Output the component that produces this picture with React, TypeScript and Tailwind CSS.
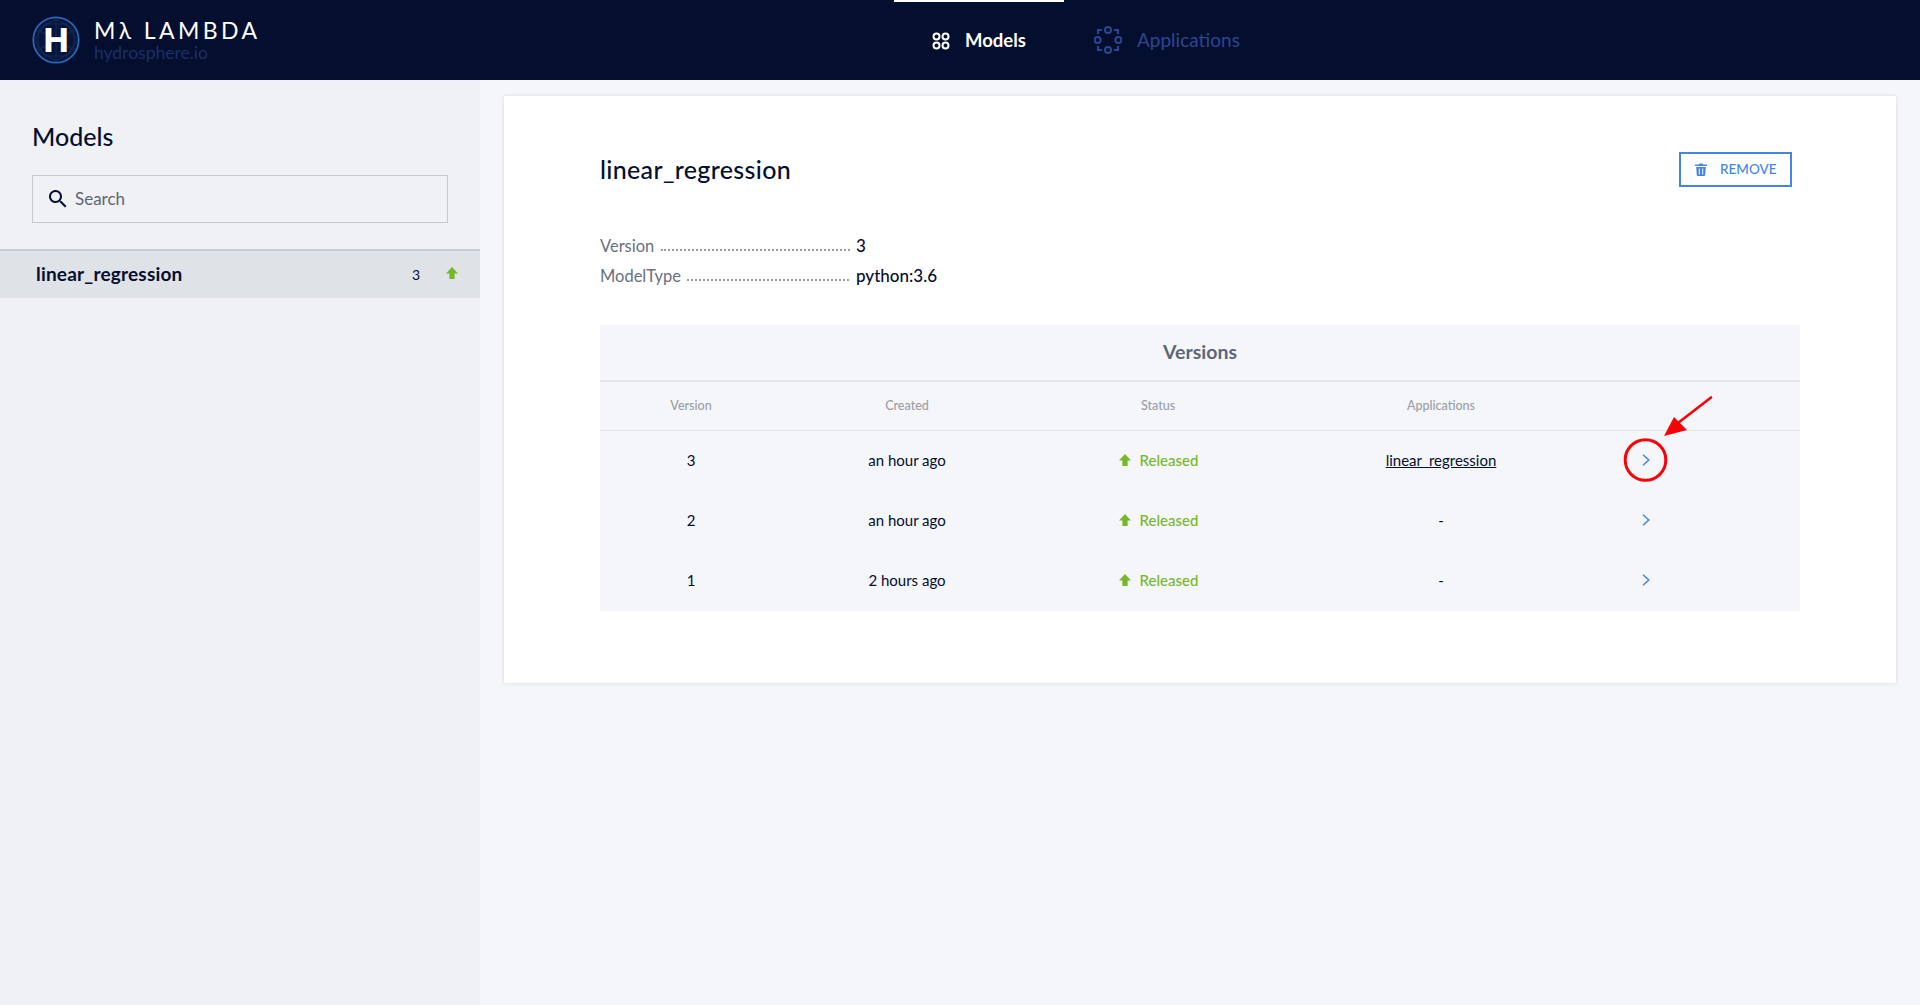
const rows = [
  { version: '3', created: 'an hour ago', app: 'linear_regression' },
  { version: '2', created: 'an hour ago', app: '-' },
  { version: '1', created: '2 hours ago', app: '-' },
];

const tableCols = 'grid grid-cols-[182px_250px_252px_314px_96px_1fr] items-center text-center';

function UpArrow({ className }: { className?: string }) {
  return (
    <svg viewBox="0 0 12 12" className={className}>
      <path d="M6 0 12 6.4H8.6V12H3.4V6.4H0Z" fill="#76b82a" />
    </svg>
  );
}

function Logo() {
  return (
    <svg viewBox="0 0 48 48" className="h-12 w-12 shrink-0">
      <circle cx="24" cy="24" r="22.7" fill="#061539" stroke="#2b66b5" strokeWidth="1.8" />
      <g stroke="#1b3a70" strokeWidth="0.6" fill="none">
        <path d="M24 3 42 14V34L24 45 6 34V14Z" />
        <path d="M6 14 42 34M42 14 6 34M24 3V45" />
        <path d="M13 8 35 8 45 24 35 40H13L3 24Z" />
      </g>
      <text x="24" y="36" textAnchor="middle" fontSize="33" fontWeight="800" fill="#ffffff" fontFamily="Inter, sans-serif">
        H
      </text>
    </svg>
  );
}

function ModelsIcon() {
  return (
    <svg viewBox="0 0 18 18" className="h-[18px] w-[18px]" fill="none" stroke="#ffffff" strokeWidth="2">
      <circle cx="4.5" cy="4.5" r="3" />
      <circle cx="13.5" cy="4.5" r="3" />
      <circle cx="4.5" cy="13.5" r="3" />
      <circle cx="13.5" cy="13.5" r="3" />
    </svg>
  );
}

function ApplicationsIcon() {
  return (
    <svg viewBox="0 0 28 28" className="h-7 w-7" fill="none" stroke="#2d4690" strokeWidth="2">
      <circle cx="14" cy="4" r="3" />
      <circle cx="14" cy="24" r="3" />
      <circle cx="3.6" cy="14" r="3" />
      <circle cx="24.4" cy="14" r="3" />
      <path d="M8 4H4V8M20 4H24V8M4 20V24H8M24 20V24H20" />
    </svg>
  );
}

function SearchIcon() {
  return (
    <svg viewBox="0 0 18 18" className="h-[18px] w-[18px] shrink-0" fill="#040e2e">
      <path d="M12.5 11h-.79l-.28-.27A6.5 6.5 0 1 0 10.73 11.43l.27.28v.79l5 4.99L17.49 16l-4.99-5Zm-6 0a4.5 4.5 0 1 1 0-9 4.5 4.5 0 0 1 0 9Z" />
    </svg>
  );
}

function TrashIcon() {
  return (
    <svg viewBox="0 0 12 13" className="h-[13px] w-3 shrink-0" fill="#4285e4">
      <path d="M0 1.6h3.8L4.4.4h3.2l.6 1.2H12v1.5H0Z" />
      <path fillRule="evenodd" d="M1.2 4h9.6l-.6 8.2-.8.8H2.6l-.8-.8ZM3.8 5.4v6h1v-6Zm3.4 0v6h1v-6Z" />
    </svg>
  );
}

function Chevron() {
  return (
    <svg viewBox="0 0 8 12" className="h-3 w-2" fill="none" stroke="#4285e4" strokeWidth="1.5">
      <path d="M1 .8 6.8 6 1 11.2" />
    </svg>
  );
}

export default function App() {
  return (
    <div className="relative flex h-[1005px] w-[1920px] flex-col overflow-hidden bg-[#f5f6fa] font-['Lato',sans-serif] text-[#040e2e]">
      <header className="flex h-20 shrink-0 bg-[#040e2e]">
        <div className="flex w-[894px] items-center gap-[14px] pl-8">
          <Logo />
          <div className="flex flex-col">
            <span className="text-[23px] leading-[24px] tracking-[3.4px] text-white">Mλ LAMBDA</span>
            <span className="mt-[1px] text-[17.5px] leading-[20px] text-[#1c2f69]">hydrosphere.io</span>
          </div>
        </div>
        <div className="flex h-20 w-[170px] items-center gap-[15px] border-t-2 border-white pl-[38px] text-[18.5px] font-bold text-white">
          <ModelsIcon />
          Models
        </div>
        <div className="ml-[30px] flex items-center gap-[15px] text-[19px] text-[#2d4690]">
          <ApplicationsIcon />
          Applications
        </div>
      </header>

      <div className="flex flex-1">
        <aside className="w-[480px] shrink-0 bg-[#eff1f5]">
          <h2 className="mt-[41px] pl-8 text-[25px] leading-[30px] font-medium">Models</h2>
          <div className="mx-8 mt-[24px] flex h-12 items-center gap-[8px] border border-[#c6c9ce] pl-4 text-[17px] text-[#5f6675]">
            <SearchIcon />
            Search
          </div>
          <div className="mt-[26px] flex h-[49px] items-center border-t-2 border-[#c9ccd2] bg-[#dfe2e7] pb-[1px] pl-9">
            <span className="flex-1 text-[19px] font-bold tracking-[0.2px]">linear_regression</span>
            <span className="text-[14px]">3</span>
            <UpArrow className="mr-[22px] mb-[2px] ml-[26px] h-3 w-3" />
          </div>
        </aside>

        <main className="flex-1 pt-4 pl-6">
          <section className="flex h-[587px] w-[1392px] flex-col bg-white pt-[56px] pl-[96px] shadow-[0_0_4px_rgba(4,14,46,0.12)]">
            <div className="flex h-[35px] items-center justify-between">
              <h1 className="text-[25px] font-medium tracking-[0.33px]">linear_regression</h1>
              <button className="mr-[104px] flex h-[35px] w-[113px] items-center gap-[13px] border-2 border-[#4285e4] pl-[14px] text-[13.5px] font-medium text-[#4285e4]">
                <TrashIcon />
                REMOVE
              </button>
            </div>

            <div className="mt-[44px] flex h-[30px] w-[440px] items-center text-[16.5px]">
              <span className="w-[60px] text-[#6a7080]">Version</span>
              <span className="mt-[8px] ml-[1px] w-[189px] flex-none border-b-2 border-dotted border-[#9a9da5]" />
              <span className="ml-[6px] text-[17px] font-medium">3</span>
            </div>
            <div className="flex h-[30px] w-[440px] items-center text-[16.5px]">
              <span className="w-[81px] text-[#6a7080]">ModelType</span>
              <span className="mt-[8px] ml-[6px] w-[162px] flex-none border-b-2 border-dotted border-[#9a9da5]" />
              <span className="ml-[7px] text-[17px] font-medium">python:3.6</span>
            </div>

            <div className="mt-[34px] w-[1200px] bg-[#f5f6fa]">
              <div className="flex h-[57px] items-center justify-center border-b-2 border-[#e1e3e8] pb-[1px] text-[19.5px] font-bold text-[#5f6675]">
                Versions
              </div>
              <div className={`${tableCols} h-[49px] border-b border-[#e1e3e8] text-[12.5px] font-medium text-[#9a9da5]`}>
                <span>Version</span>
                <span>Created</span>
                <span>Status</span>
                <span>Applications</span>
              </div>
              {rows.map((row) => (
                <div key={row.version} className={`${tableCols} h-[60px] pb-[2px] text-[15px]`}>
                  <span>{row.version}</span>
                  <span>{row.created}</span>
                  <span className="flex items-center justify-center gap-[9px] pl-[1px] font-medium text-[#76b82a]">
                    <UpArrow className="h-3 w-3" />
                    Released
                  </span>
                  <span className={row.app === '-' ? '' : 'underline'}>{row.app}</span>
                  <span className="flex justify-center">
                    <Chevron />
                  </span>
                </div>
              ))}
            </div>
          </section>
        </main>
      </div>

      {/* red annotation drawn over the first row */}
      <svg viewBox="0 0 100 100" className="absolute top-[393px] left-[1620px] h-[100px] w-[100px]" fill="none">
        <circle cx="25.5" cy="67" r="20.3" stroke="#fb0007" strokeWidth="3" />
        <path d="M91 4.5 58 30" stroke="#fb0007" strokeWidth="2.6" strokeLinecap="round" />
        <path d="M44 43 54 24 67 37Z" fill="#fb0007" />
      </svg>
    </div>
  );
}
